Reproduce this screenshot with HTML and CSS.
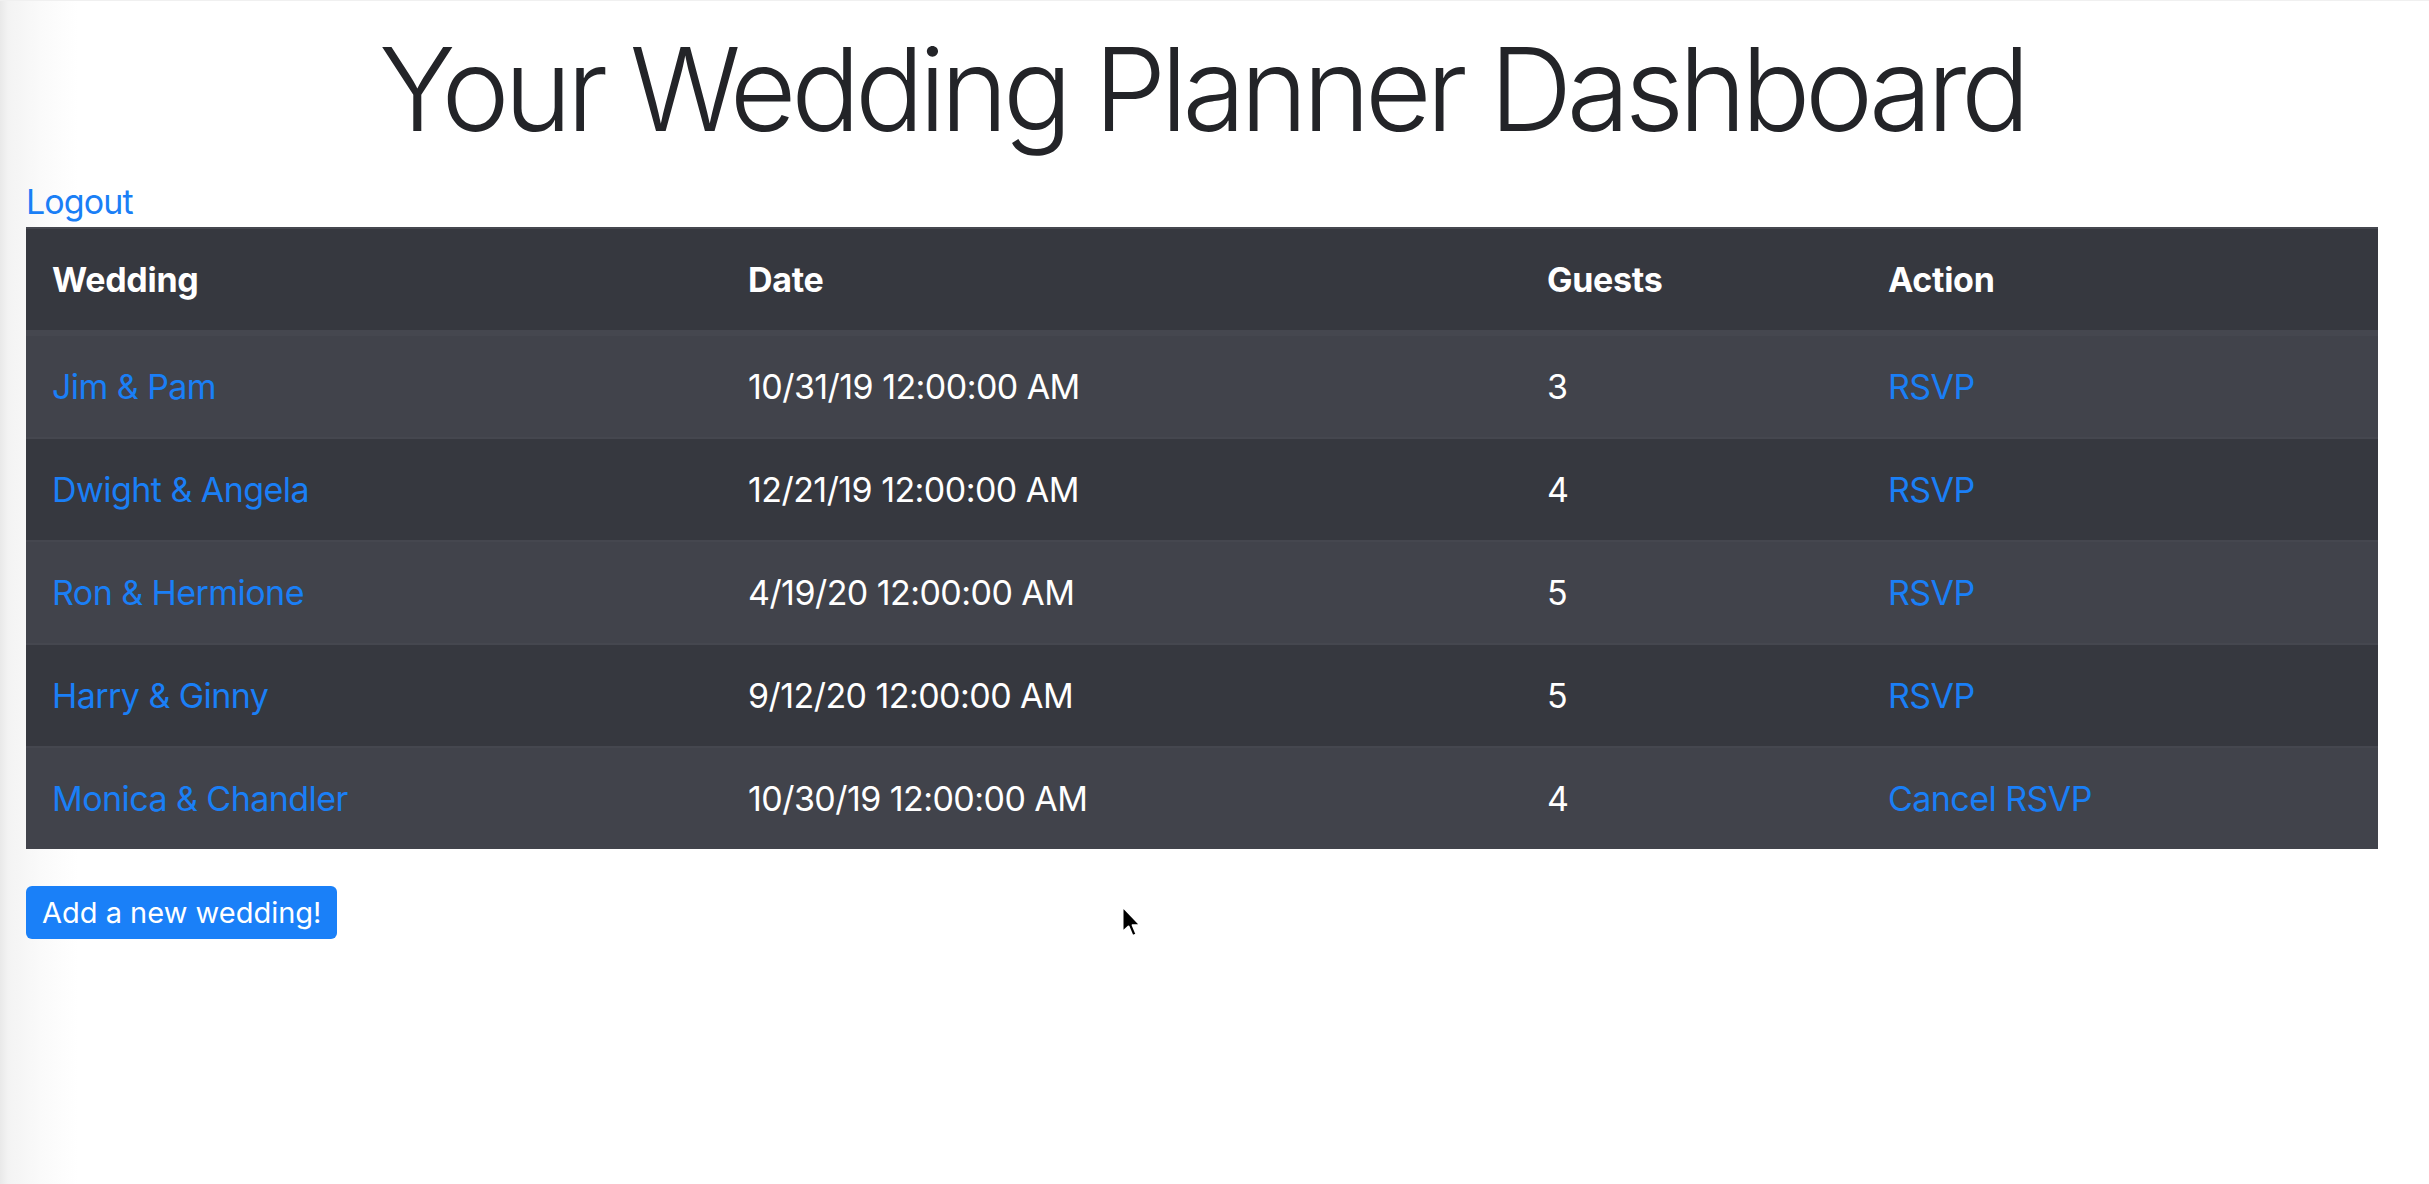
FILE: index.html
```html
<!DOCTYPE html>
<html lang="en">
<head>
<meta charset="utf-8">
<title>Your Wedding Planner Dashboard</title>
<link rel="stylesheet" href="styles.css">
</head>
<body>
<div class="page">
  <h1 class="title">Your Wedding Planner Dashboard</h1>
  <a class="logout" href="#">Logout</a>
  <table class="weddings">
    <colgroup>
      <col class="c-wedding">
      <col class="c-date">
      <col class="c-guests">
      <col class="c-action">
    </colgroup>
    <thead>
      <tr><th>Wedding</th><th>Date</th><th>Guests</th><th>Action</th></tr>
    </thead>
    <tbody>
      <tr class="odd"><td><a href="#">Jim &amp; Pam</a></td><td>10/31/19 12:00:00 AM</td><td>3</td><td><a href="#">RSVP</a></td></tr>
      <tr><td><a href="#">Dwight &amp; Angela</a></td><td>12/21/19 12:00:00 AM</td><td>4</td><td><a href="#">RSVP</a></td></tr>
      <tr class="odd"><td><a href="#">Ron &amp; Hermione</a></td><td>4/19/20 12:00:00 AM</td><td>5</td><td><a href="#">RSVP</a></td></tr>
      <tr><td><a href="#">Harry &amp; Ginny</a></td><td>9/12/20 12:00:00 AM</td><td>5</td><td><a href="#">RSVP</a></td></tr>
      <tr class="odd"><td><a href="#">Monica &amp; Chandler</a></td><td>10/30/19 12:00:00 AM</td><td>4</td><td><a href="#">Cancel RSVP</a></td></tr>
    </tbody>
  </table>
  <a class="btn" href="#">Add a new wedding!</a>
</div>
<svg class="cursor" width="22" height="34" viewBox="0 0 22 34" aria-hidden="true">
  <path d="M1.5 1.5 L1.5 27 L7.5 21.5 L11.5 31 L15.5 29.3 L11.6 20.2 L19.5 20.2 Z" fill="#000" stroke="#fff" stroke-width="2" stroke-linejoin="round"/>
</svg>
</body>
</html>
```
FILE: styles.css
```css
html, body {
  margin: 0;
  padding: 0;
}
body {
  min-height: 1184px;
  background: linear-gradient(to right, #e9e9e9 0, #f3f3f3 8px, #fafafa 40px, #ffffff 78px);
  border-top: 1px solid #f0f0f0;
  font-family: Inter, "Noto Sans", "Liberation Sans", sans-serif;
  color: #212529;
  position: relative;
}
.page {
  padding: 20px 51px 0 26px;
  display: flex;
  flex-direction: column;
  align-items: flex-start;
}
.title {
  align-self: stretch;
  margin: 0 0 17px;
  text-align: center;
  font-weight: 300;
  font-size: 115px;
  line-height: 1.2;
  color: #232428;
  letter-spacing: -5.3px;
}
.logout {
  display: block;
  font-size: 34px;
  line-height: 51px;
  letter-spacing: -0.9px;
  color: #1a7ff6;
  text-decoration: none;
}
.weddings {
  width: 2352px;
  table-layout: fixed;
  border-collapse: separate;
  border-spacing: 0;
  background: #36383f;
  color: #ffffff;
  font-size: 34px;
  line-height: 51px;
  letter-spacing: -0.55px;
  margin-bottom: 37px;
}
.c-wedding { width: 696px; }
.c-date { width: 799px; }
.c-guests { width: 341px; }
.c-action { width: 516px; }
.weddings th,
.weddings td {
  text-align: left;
  vertical-align: top;
  padding: 25px 26px;
  border-top: 2px solid #45474f;
}
.weddings th {
  font-weight: 700;
  letter-spacing: -0.3px;
  border-bottom: 4px solid #45474f;
}
.weddings tr.odd {
  background: #41434b;
}
.weddings a {
  color: #1a7ff6;
  text-decoration: none;
}
.btn {
  display: block;
  background: #1a80f8;
  color: #ffffff;
  text-decoration: none;
  font-size: 29px;
  line-height: 37px;
  padding: 8px 16px;
  border-radius: 6px;
}
.cursor {
  position: absolute;
  left: 1121px;
  top: 904px;
}
```
